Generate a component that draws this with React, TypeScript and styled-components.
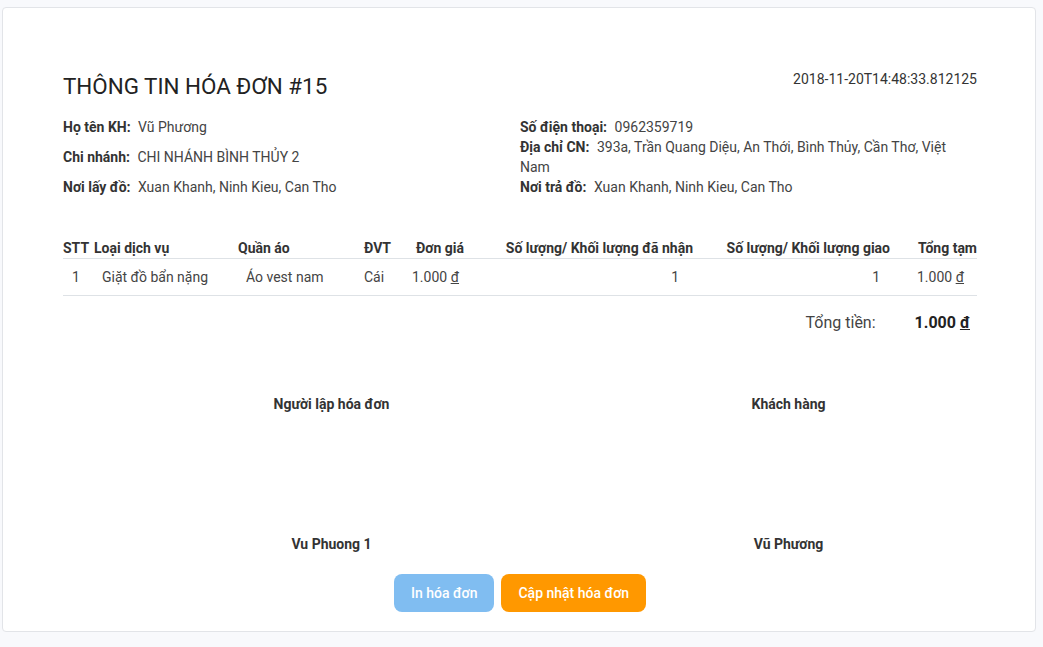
import * as React from 'react'
import styled, { createGlobalStyle } from 'styled-components'

const GlobalStyle = createGlobalStyle`
  html, body {
    margin: 0;
    padding: 0;
    background: #f8f9fc;
  }

  body {
    font-family: Roboto, 'Noto Sans', 'Liberation Sans', sans-serif;
    color: #333;
  }
`

interface InfoItem {
  label: string
  value: string
}

interface Line {
  stt: number
  service: string
  item: string
  unit: string
  price: string
  received: number
  delivered: number
  subtotal: string
}

const info: InfoItem[] = [
  { label: 'Họ tên KH:', value: 'Vũ Phương' },
  { label: 'Số điện thoại:', value: '0962359719' },
  { label: 'Chi nhánh:', value: 'CHI NHÁNH BÌNH THỦY 2' },
  { label: 'Địa chỉ CN:', value: '393a, Trần Quang Diệu, An Thới, Bình Thủy, Cần Thơ, Việt Nam' },
  { label: 'Nơi lấy đồ:', value: 'Xuan Khanh, Ninh Kieu, Can Tho' },
  { label: 'Nơi trả đồ:', value: 'Xuan Khanh, Ninh Kieu, Can Tho' },
]

const lines: Line[] = [
  {
    stt: 1,
    service: 'Giặt đồ bẩn nặng',
    item: 'Áo vest nam',
    unit: 'Cái',
    price: '1.000',
    received: 1,
    delivered: 1,
    subtotal: '1.000',
  },
]

const Money: React.FC<{ value: string }> = ({ value }) => (
  <>
    {value} <Dong>đ</Dong>
  </>
)

const App: React.FC = () => {
  return (
    <Page>
      <GlobalStyle />
      <Card>
        <Header>
          <Title>THÔNG TIN HÓA ĐƠN #15</Title>
          <Timestamp>2018-11-20T14:48:33.812125</Timestamp>
        </Header>

        <InfoGrid>
          {info.map((row) => (
            <InfoRow key={row.label}>
              <InfoLabel>{row.label}</InfoLabel> {row.value}
            </InfoRow>
          ))}
        </InfoGrid>

        <Table>
          <HeadCell>STT</HeadCell>
          <HeadCell>Loại dịch vụ</HeadCell>
          <HeadCell>Quần áo</HeadCell>
          <HeadCell>ĐVT</HeadCell>
          <HeadCell $pl={12}>Đơn giá</HeadCell>
          <HeadCell $right $pr={7}>Số lượng/ Khối lượng đã nhận</HeadCell>
          <HeadCell $right $pr={15}>Số lượng/ Khối lượng giao</HeadCell>
          <HeadCell $right>Tổng tạm</HeadCell>
          {lines.map((l) => (
            <React.Fragment key={l.stt}>
              <Cell $pl={9}>{l.stt}</Cell>
              <Cell $pl={8}>{l.service}</Cell>
              <Cell $pl={8}>{l.item}</Cell>
              <Cell>{l.unit}</Cell>
              <Cell $pl={8}>
                <Money value={l.price} />
              </Cell>
              <Cell $right $pr={21}>{l.received}</Cell>
              <Cell $right $pr={25}>{l.delivered}</Cell>
              <Cell $pl={12}>
                <Money value={l.subtotal} />
              </Cell>
            </React.Fragment>
          ))}
        </Table>

        <TotalRow>
          <TotalLabel>Tổng tiền:</TotalLabel>
          <TotalValue>
            <Money value="1.000" />
          </TotalValue>
        </TotalRow>

        <Signatures>
          <SignName>Người lập hóa đơn</SignName>
          <SignName>Khách hàng</SignName>
          <SignName>Vu Phuong 1</SignName>
          <SignName>Vũ Phương</SignName>
        </Signatures>

        <Actions>
          <Button $color="#80bdf1">In hóa đơn</Button>
          <Button $color="#ff9800">Cập nhật hóa đơn</Button>
        </Actions>
      </Card>
    </Page>
  )
}

const Page = styled.div`
  padding: 7px 7px 15px 2px;
`

const Card = styled.div`
  background: #fff;
  border: 1px solid #e2e4e8;
  border-radius: 4px;
  padding: 61px 58px 19px 60px;
`

const Header = styled.div`
  display: flex;
  justify-content: space-between;
  align-items: flex-start;
  height: 30px;
`

const Title = styled.h2`
  margin: 4px 0 0;
  font-size: 22.4px;
  font-weight: 400;
  line-height: 26px;
  color: #222;
`

const Timestamp = styled.div`
  font-size: 14px;
  line-height: 20px;
  color: #333;
`

const InfoGrid = styled.div`
  display: grid;
  grid-template-columns: 1fr 1fr;
  align-items: center;
  margin-top: 18px;
  font-size: 14px;
  line-height: 20px;
`

const InfoRow = styled.div`
  color: #444;
`

const InfoLabel = styled.span`
  font-weight: 700;
  color: #333;
  margin-right: 4px;
`

const Table = styled.div`
  display: grid;
  grid-template-columns: 31px 144px 126px 40px 76px 220px 205px 72px;
  margin-top: 41px;
  font-size: 14px;
  line-height: 20px;
`

const HeadCell = styled.div<{ $right?: boolean; $pl?: number; $pr?: number }>`
  font-weight: 700;
  color: #333;
  white-space: nowrap;
  text-align: ${(p) => (p.$right ? 'right' : 'left')};
  padding-left: ${(p) => p.$pl || 0}px;
  padding-right: ${(p) => p.$pr || 0}px;
  border-bottom: 1px solid #dee2e6;
`

const Cell = styled.div<{ $right?: boolean; $pl?: number; $pr?: number }>`
  color: #444;
  white-space: nowrap;
  text-align: ${(p) => (p.$right ? 'right' : 'left')};
  padding: 8px ${(p) => p.$pr || 0}px 8px ${(p) => p.$pl || 0}px;
  border-bottom: 1px solid #dee2e6;
`

const Dong = styled.span`
  text-decoration: underline;
`

const TotalRow = styled.div`
  display: flex;
  justify-content: flex-end;
  align-items: baseline;
  margin-top: 15px;
  padding-right: 7px;
  font-size: 16px;
  line-height: 24px;
`

const TotalLabel = styled.span`
  color: #444;
  margin-right: 39px;
`

const TotalValue = styled.span`
  font-weight: 700;
  color: #222;
`

const Signatures = styled.div`
  display: grid;
  grid-template-columns: 457px 457px;
  row-gap: 120px;
  margin: 59px -40px 0 40px;
  font-size: 14px;
  line-height: 20px;
`

const SignName = styled.div`
  text-align: center;
  font-weight: 700;
  color: #333;
`

const Actions = styled.div`
  display: flex;
  justify-content: center;
  gap: 7px;
  margin-top: 20px;
`

const Button = styled.button<{ $color: string }>`
  height: 38px;
  padding: 0 17px;
  border: none;
  border-radius: 8px;
  background: ${(p) => p.$color};
  color: #fff;
  font-family: Roboto, 'Noto Sans', sans-serif;
  font-size: 14px;
  font-weight: 500;
  cursor: pointer;
`

export default App
